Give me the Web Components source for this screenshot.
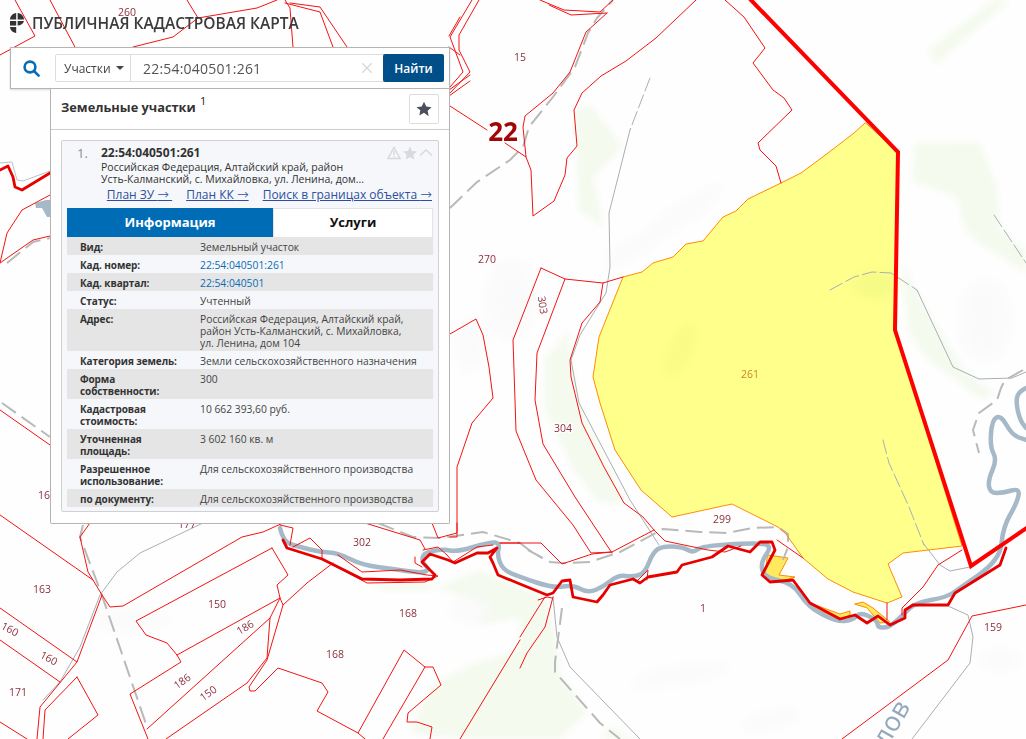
<!DOCTYPE html>
<html lang="ru">
<head>
<meta charset="utf-8">
<title>Публичная кадастровая карта</title>
<style>
  html, body { margin: 0; padding: 0; background: #fff; }
  body { font-family: "Open Sans", "Liberation Sans", sans-serif; }
</style>
</head>
<body>

<kadastr-app>
  <site-brand>ПУБЛИЧНАЯ КАДАСТРОВАЯ КАРТА</site-brand>
  <search-box kind="Участки" value="22:54:040501:261"></search-box>
  <results-panel heading="Земельные участки" count="1">
    <parcel-card index="1." number="22:54:040501:261">
      <span slot="address">Российская Федерация, Алтайский край, район<br>Усть-Калманский, с. Михайловка, ул. Ленина, дом...</span>
      <info-row label="Вид:">Земельный участок</info-row>
      <info-row label="Кад. номер:"><a href="#">22:54:040501:261</a></info-row>
      <info-row label="Кад. квартал:"><a href="#">22:54:040501</a></info-row>
      <info-row label="Статус:">Учтенный</info-row>
      <info-row label="Адрес:">Российская Федерация, Алтайский край,<br>район Усть-Калманский, с. Михайловка,<br>ул. Ленина, дом 104</info-row>
      <info-row label="Категория земель:">Земли сельскохозяйственного назначения</info-row>
      <info-row label="Форма собственности:">300</info-row>
      <info-row label="Кадастровая стоимость:">10 662 393,60 руб.</info-row>
      <info-row label="Уточненная площадь:">3 602 160 кв. м</info-row>
      <info-row label="Разрешенное использование:">Для сельскохозяйственного производства</info-row>
      <info-row label="по документу:">Для сельскохозяйственного производства</info-row>
    </parcel-card>
  </results-panel>
</kadastr-app>

<script>
// map data, page pixels
const GREEN = [
  '575,110 591,105 623,147 593,177 604,227 579,210',
  '994,0 928,50 935,65 1010,0',
  '915,143 979,142 997,187 1000,230 1026,250 1026,273 975,240 964,227 957,197 913,182',
  '568,330 545,360 545,410 575,473 608,503 624,503 608,467 579,403 571,360',
  '902,260 917,293 964,370 994,393 983,400 928,360 909,333',
  '367,583 427,583 470,600 480,625 520,617 520,650 470,665 430,687 410,733 470,739 560,739 587,713 560,673 555,633 545,597 520,587 480,570 430,590 385,590',
  '580,480 613,497 600,502',
  '600,739 610,727 640,739',
  '860,270 895,262 893,300 870,290'
];
const GREY_SPOTS = [
  [680, 215, 50, 9, -35], [630, 250, 30, 8, -30], [510, 300, 24, 40, 0], [470, 345, 14, 26, 0],
  [985, 320, 26, 40, 0], [1000, 660, 20, 10, 0], [680, 675, 50, 8, -10], [770, 720, 30, 8, -15],
  [470, 610, 20, 12, 0], [130, 620, 40, 10, 0]
];
const ROADS = [
  '450,208 477,182 510,160 523,147 529,127 553,97 575,67 588,33 597,18 613,0',
  '7,263 33,242 50,238',
  '2,403 50,437',
  '83,525 80,537 100,590 107,610 147,727',
  '378,523 413,537 440,538 483,532 520,543 529,550 542,558',
  '528,550 550,562 563,563 590,562 620,552 663,529 700,532 727,533 753,528 778,527 788,534 788,547 783,560',
  '562,608 555,662 555,672 600,723 620,739',
  '1023,370 1005,380 1001,388 997,400 979,413 973,430 979,453'
];
const TRACKS = [
  '203,523 140,553 117,572 100,595 80,647 60,682 43,700',
  '630,130 609,213 610,267 606,293 580,335 571,360 579,403 630,500 659,545',
  '553,597 557,637 570,667 640,739',
  '948,606 968,615 973,637 970,663 912,739',
  '923,543 940,565 950,571 970,567',
  '917,290 953,367 979,379 1012,378 1026,372'
];
const TRACKS_DASHED = [
  '650,78 630,130',
  '830,290 854,277 872,272 891,273 917,290',
  '883,440 889,463 909,507 924,545',
  '994,215 1026,263'
];
const RIVER = [
  '280,528 283,542 300,547 320,552 338,553 362,565 393,569 420,573 430,570 422,562 423,553 443,549 457,552 490,542 500,543 497,555 503,570 520,577 553,588 573,585 588,593 603,587 618,575 633,577 645,573 653,552 663,546 683,547 693,553 702,546 753,543 773,545 760,563 765,578 793,583 808,607 837,622 853,620 860,612 877,620 878,628 890,627 905,613 915,603 947,597 957,590 1000,560 1003,527 1017,503 1020,488 1003,493 990,493 988,480 997,460 990,447 992,420 1001,415 1012,435 1026,440',
  '1026,388 1018,392 1016,403 1020,420 1026,428'
];
const PARCELS = [
  '15,0 35,36 0,55', '50,0 75,47', '133,47 173,37 198,18 257,8 277,0', '187,0 198,18',
  '285,0 290,8 293,47', '290,3 320,7 347,47', '285,3 320,12 333,47',
  '472,0 450,37 463,72 450,87', '479,0 459,35 459,50 470,72 450,93',
  '449,36 460,17', '449,47 460,55', '449,90 470,75', '449,96 470,81',
  '540,0 564,10 600,12 613,0', '549,5 571,15 607,13',
  '607,13 586,32 570,72 553,93 525,116 523,127 526,157 505,143', '487,130 450,106',
  '526,157 531,170 533,216 554,201 565,175 567,158 577,146 574,110 582,93 601,76 626,61 656,38 696,0',
  '725,0 744,17 765,48 753,63 773,90 784,98 792,110 758,143 760,150 776,166 781,183',
  '541,268 565,279 603,283 623,277',
  '541,268 513,340 516,431 536,480 573,525 591,553 612,552 654,530',
  '565,279 537,353 535,400 543,444 575,497 612,553',
  '603,283 600,302 582,323 570,360 571,377 582,423 604,467 624,503 643,517 654,530 665,541 708,550 725,552 741,546',
  '450,334 476,319 483,335 489,367 493,398 472,423 457,467 457,537 450,537',
  '500,543 541,543 562,564 592,554 612,552',
  '777,540 803,558', '887,603 887,620',
  '962,550 938,565 923,587 902,608 902,615',
  '842,739 948,660 972,616 1026,605',
  '545,597 520,637', '553,597 545,627 527,653 520,668',
  '0,515 93,580 102,595 77,662 0,608',
  '80,537 90,523', '80,537 88,572 93,580',
  '102,595 110,607 123,606 242,537 263,532 283,523',
  '0,640 60,682',
  '77,662 40,707 37,739', '77,677 98,715 68,739', '77,677 45,710 43,739', '0,722 27,739',
  '272,548 136,621 146,635 167,643 177,655 181,662 130,694 148,739',
  '272,548 288,575 277,585 280,598 177,655',
  '280,598 270,618 267,658 247,683 166,739',
  '270,618 147,729',
  '283,605 267,660 249,687 250,691 255,691 278,668 322,683 328,692 317,711 358,733 404,650 425,667 433,667 441,685 408,713 407,722 417,722 432,727 430,739',
  '425,667 383,739',
  '280,598 283,605 307,583 333,563', '358,733 365,739', '520,640 460,739',
  '365,523 420,540 425,549', '432,523 438,538 457,533 457,523', '500,543 520,543',
  '293,547 310,538 322,550 322,559', '338,555 362,572 400,570 427,575 438,576 425,582 367,583 333,565',
  '415,557 415,563 422,567', '423,550 438,547 447,555 453,562 477,547 493,545',
  '0,263 7,233 22,210 50,195', '0,263 33,240 50,236', '0,410 50,445', '280,525 293,528 290,545',
  '538,600 547,597 552,598', '638,580 648,570 647,580'
];
const BOUNDARY_RIVER = '283,540 287,548 322,559 362,579 400,580 432,579 435,575 428,568 422,562 430,554 448,560 455,563 477,553 488,553 497,548 490,557 493,563 498,575 520,584 547,595 553,593 562,581 570,580 573,597 597,602 603,595 610,585 633,579 640,583 648,577 677,572 682,565 712,557 728,546 750,552 760,542 772,542 775,550 762,575 770,582 793,580 810,603 840,619 855,615 867,623 878,616 890,625 905,618 905,610 913,605 948,605 955,593 1000,565 1006,548';
const BOUNDARY_MAIN = '749,-2 898,152 895,330 971,566 1028,527';
const PLOT = '865,123 854,133 828,153 801,173 781,183 748,199 736,211 723,217 703,241 686,244 673,257 653,263 642,272 623,277 599,337 593,377 600,403 615,450 641,490 672,517 732,504 778,527 786,534 803,558 828,579 853,592 887,603 902,597 888,564 903,553 962,546 895,330 898,152';
const SLIVERS = [
  '768,555 788,558 779,575 795,577 780,582 765,575',
  '810,603 840,614 850,611 850,615 840,619 810,607',
  '855,604 863,602 873,608 890,622 880,623 867,608'
];
const LABELS = [
  ['260', 127, 12], ['15', 520, 57], ['270', 487, 259], ['304', 563, 428, 0, 1], ['299', 722, 519], ['302', 362, 542],
  ['168', 408, 613], ['168', 335, 654], ['163', 42, 589], ['150', 217, 604], ['1', 703, 608], ['159', 993, 627],
  ['171', 18, 692], ['177', 187, 524], ['160', 47, 495],
  ['303', 543, 305, 82], ['186', 245, 627, -30], ['186', 182, 681, -35], ['150', 208, 693, -35],
  ['160', 10, 629, 28], ['160', 49, 658, 28]
];

const poly = (list, attrs) => list.map(p => `<polyline points="${p}" ${attrs}/>`).join('');

// rounds a polyline through the midpoints of its segments
const smooth = (points) => {
  const pts = points.split(' ').map(p => p.split(',').map(Number));
  let d = `M${pts[0].join(' ')}`;
  for (let i = 1; i < pts.length - 1; i++) {
    const mx = (pts[i][0] + pts[i + 1][0]) / 2;
    const my = (pts[i][1] + pts[i + 1][1]) / 2;
    d += `Q${pts[i].join(' ')} ${mx} ${my}`;
  }
  return d + `L${pts[pts.length - 1].join(' ')}`;
};

class MapCanvas extends HTMLElement {
  connectedCallback() {
    const labels = LABELS.map(([t, x, y, r, halo]) => {
      const rot = r ? `transform="rotate(${r} ${x} ${y})"` : '';
      return `<text x="${x}" y="${y}" ${rot} class="${halo ? 'halo' : ''}">${t}</text>`;
    }).join('');
    this.attachShadow({ mode: 'open' });
    this.shadowRoot.innerHTML = `
      <style>
        :host { position: absolute; inset: 0; display: block; background: #fefefe; }
        svg { display: block; width: 100%; height: 100%; }
        text { font: 10.5px "Open Sans", "Liberation Sans", sans-serif; fill: #8c2f3d; text-anchor: middle; dominant-baseline: central; }
        text.halo { paint-order: stroke; stroke: #fff; stroke-width: 3px; }
        text.sheet { font-size: 26px; font-weight: 700; fill: #a00808; }
        text.plot { fill: #c8862a; }
        text.river { font-size: 27px; fill: #93a8bb; }
      </style>
      <svg viewBox="0 0 1026 739" fill="none" stroke-linejoin="round" stroke-linecap="round">
        <defs><filter id="soft" x="-20%" y="-20%" width="140%" height="140%"><feGaussianBlur stdDeviation="3"/></filter>
        <filter id="softer" x="-50%" y="-50%" width="200%" height="200%"><feGaussianBlur stdDeviation="6"/></filter></defs>
        <g filter="url(#soft)">${GREEN.map(p => `<polygon points="${p}" fill="#f4faee"/>`).join('')}</g>
        <g filter="url(#softer)">${GREY_SPOTS.map(([x, y, rx, ry, r]) => `<ellipse cx="${x}" cy="${y}" rx="${rx}" ry="${ry}" transform="rotate(${r} ${x} ${y})" fill="#fafafa"/>`).join('')}</g>
        <polygon points="${PLOT}" fill="#ffff8c"/>
        <g filter="url(#softer)">
          <ellipse cx="680" cy="350" rx="12" ry="30" transform="rotate(25 680 350)" fill="#f6f684" opacity=".6"/>
          <ellipse cx="875" cy="285" rx="22" ry="14" fill="#f2fa84" opacity=".8"/>
        </g>
        ${SLIVERS.map(p => `<polygon points="${p}" fill="#ffe95e" stroke="#ff8c00" stroke-width="1"/>`).join('')}
        ${poly(TRACKS, 'stroke="#a7afb6" stroke-width="1"')}
        ${poly(TRACKS_DASHED, 'stroke="#a7afb6" stroke-width="1" stroke-dasharray="14 4"')}
        ${poly(ROADS, 'stroke="#b9b9b9" stroke-width="2" stroke-linecap="butt" stroke-dasharray="17 7"')}
        ${RIVER.map(p => `<path d="${smooth(p)}" stroke="#a5b9c8" stroke-width="4.500"/>`).join('')}
        <polygon points="35,203 46,200 50,200 50,217 47,217 42,208 36,208" fill="#a5b9c8"/>
        <polyline points="0,163 12,162 17,180 23,181 50,171" stroke="#b4c2cd" stroke-width="1"/>
        <polygon points="${PLOT}" stroke="#ff8c00" stroke-width="1"/>
        ${poly(PARCELS, 'stroke="#f41212" stroke-width="1"')}
        <polyline points="${BOUNDARY_RIVER}" stroke="#e60000" stroke-width="2.800"/>
        <polyline points="0,170 8,166 13,177 15,187 22,190 50,173" stroke="#e60000" stroke-width="2.800"/>
        <polyline points="${BOUNDARY_MAIN}" stroke="#ff0000" stroke-width="4" stroke-linejoin="miter"/>
        ${labels}
        <text x="750" y="374" class="plot">261</text>
        <text x="503" y="131" class="sheet">22</text>
        <text x="890" y="722" transform="rotate(-60 890 722)" class="river">лов</text>
      </svg>
    `;
  }
}

class SiteBrand extends HTMLElement {
  connectedCallback() {
    this.attachShadow({ mode: 'open' });
    this.shadowRoot.innerHTML = `
      <style>
        :host { display: flex; align-items: center; gap: 8px; height: 47px; box-sizing: border-box; padding-bottom: 1px;
          color: #3b3b3b; font: 600 15.500px/20px "Open Sans", "Liberation Sans", sans-serif; white-space: nowrap; }
        svg { width: 14px; height: 20px; flex: none; margin-top: -1px; }
      </style>
      <svg viewBox="0 0 14 20" fill="#333">
        <path d="M6.200 0C2.700.4 0 3.200 0 6.600h6.200z"/>
        <path d="M7.600 0C11 .2 14 3 14 6.600H7.600z"/>
        <path d="M0 8h6.200v4.600H0z"/>
        <path d="M7.600 8H14c-.6 2.600-3.200 4.600-6.400 4.600z"/>
        <path d="M0 14h6.200v6C2.700 19.400 0 17 0 14z"/>
      </svg>
      <span><slot></slot></span>
    `;
  }
}

class SearchBox extends HTMLElement {
  connectedCallback() {
    this.attachShadow({ mode: 'open' });
    this.shadowRoot.innerHTML = `
      <style>
        :host { display: flex; align-items: center; width: 440px; height: 42px; box-sizing: border-box; background: #fff;
          border: 1px solid #b4b4b4; box-shadow: 0 1px 2px rgba(0,0,0,.15); font-family: "Open Sans", "Liberation Sans", sans-serif; }
        .lens { width: 44px; display: flex; justify-content: center; flex: none; }
        .lens svg { width: 17px; height: 17px; margin-left: -3px; }
        .group { display: flex; width: 389px; height: 28px; box-sizing: border-box; border: 1px solid #ddd; border-radius: 2px; }
        .kind { width: 75px; flex: none; box-sizing: border-box; display: flex; align-items: center; gap: 5px; padding-left: 8px;
          border-right: 1px solid #ddd; font-size: 12px; color: #444; }
        .kind i { width: 0; height: 0; border: 4px solid transparent; border-top-color: #444; border-bottom: 0; }
        .input { flex: 1; display: flex; align-items: center; padding-left: 12px; font-size: 14px; color: #555; letter-spacing: .2px; }
        .clear { width: 22px; flex: none; display: flex; align-items: center; }
        .clear svg { width: 10px; height: 10px; }
        button { width: 61px; flex: none; margin: -1px; border: 0; border-radius: 2px; background: #004f88; color: #fff;
          font: 600 12px "Open Sans", "Liberation Sans", sans-serif; padding: 0; }
      </style>
      <div class="lens">
        <svg viewBox="0 0 17 17" fill="none" stroke="#0a6cb4" stroke-width="2.600" stroke-linecap="round"><circle cx="7" cy="7" r="5.400"/><path d="M11 11l4.600 4.600"/></svg>
      </div>
      <div class="group">
        <div class="kind">${this.getAttribute('kind')}<i></i></div>
        <div class="input"><span style="flex:1">${this.getAttribute('value')}</span>
          <div class="clear"><svg viewBox="0 0 10 10" stroke="#d8d8d8" stroke-width="1.300"><path d="M0 0l10 10M10 0L0 10"/></svg></div>
        </div>
        <button type="button">Найти</button>
      </div>
    `;
  }
}

class ResultsPanel extends HTMLElement {
  connectedCallback() {
    this.attachShadow({ mode: 'open' });
    this.shadowRoot.innerHTML = `
      <style>
        :host { display: block; width: 400px; margin-left: 40px; box-sizing: border-box; background: #fff;
          border: 1px solid #b4b4b4; border-top: 0; border-radius: 0 0 2px 2px; font-family: "Open Sans", "Liberation Sans", sans-serif; }
        header { height: 41px; box-sizing: border-box; display: flex; align-items: center; justify-content: space-between;
          padding: 0 10px 0 10px; border-bottom: 1px solid #ccc; }
        h2 { margin: 0 0 5px; font-size: 12.800px; font-weight: 700; color: #333; line-height: 16px; }
        sup { font-size: 11px; font-weight: 400; color: #222; line-height: 0; vertical-align: 7px; margin-left: 1px; }
        .fav { width: 30px; height: 30px; box-sizing: border-box; border: 1px solid #ddd; border-radius: 2px; display: flex; align-items: center; justify-content: center; }
        .fav svg { width: 16px; height: 16px; }
        .body { padding: 10px 10px 11px; }
      </style>
      <header>
        <h2>${this.getAttribute('heading')} <sup>${this.getAttribute('count')}</sup></h2>
        <div class="fav"><svg viewBox="0 0 24 24" fill="#4a4f5a"><path d="M12 1l3.400 7.300 7.900 1-5.800 5.500 1.500 7.900L12 17.800l-7 3.900 1.500-7.900L.7 9.300l7.900-1z"/></svg></div>
      </header>
      <div class="body"><slot></slot></div>
    `;
  }
}

class ParcelCard extends HTMLElement {
  connectedCallback() {
    this.attachShadow({ mode: 'open' });
    this.shadowRoot.innerHTML = `
      <style>
        :host { display: block; box-sizing: border-box; background: #f5f7fa; border: 1px solid #cfd1d3; border-radius: 2px; padding: 0 5px 4px; color: #333; }
        .head { position: relative; display: grid; grid-template-columns: 24px 1fr; padding: 4px 0 0 10px; height: 44px; box-sizing: border-box; margin-bottom: 2px; }
        .idx { font-size: 13px; line-height: 16px; color: #8a8f96; }
        .num { font-size: 12px; font-weight: 700; line-height: 16px; color: #333; }
        .addr { font-size: 10.500px; line-height: 12px; }
        .tools { position: absolute; right: 0; top: 5px; display: flex; gap: 2px; }
        .tools svg { width: 14px; height: 14px; display: block; }
        nav { display: flex; justify-content: flex-end; gap: 14px; font-size: 12px; line-height: 16px; height: 16px; padding-right: 1px; margin-bottom: 5px; }
        nav a { color: #2e4f9e; white-space: pre; }
        nav span { font-family: "DejaVu Sans", sans-serif; font-size: 14px; line-height: 10px; font-weight: 300; }
        .tabs { display: grid; grid-template-columns: 206px 1fr; height: 29px; font-size: 13px; font-weight: 700; line-height: 29px; text-align: center; }
        .tabs div { background: #006cb5; color: #fff; }
        .tabs div + div { background: #fff; color: #111; border: 1px solid #e3e3e3; border-bottom: 0; line-height: 27px; box-sizing: border-box; }
      </style>
      <div class="head">
        <span class="idx">${this.getAttribute('index')}</span>
        <div>
          <div class="num">${this.getAttribute('number')}</div>
          <div class="addr"><slot name="address"></slot></div>
        </div>
        <div class="tools">
          <svg viewBox="0 0 14 14" fill="none" stroke="#d6d9dd" stroke-width="1.500"><path d="M7 1.500L13 12.500H1z"/><path d="M7 5v4M7 10v1.300"/></svg>
          <svg viewBox="0 0 14 14" fill="#d6d9dd"><path d="M7 .6l2 4.300 4.700.6-3.400 3.200.9 4.700L7 11.100l-4.200 2.300.9-4.700L.3 5.500 5 4.900z"/></svg>
          <svg viewBox="0 0 14 14" fill="none" stroke="#d6d9dd" stroke-width="1.500"><path d="M1 9.500L7 4l6 5.500"/></svg>
        </div>
      </div>
      <nav>
        <a href="#">План ЗУ <span>→</span> </a>
        <a href="#">План КК <span>→</span></a>
        <a href="#">Поиск в границах объекта <span>→</span></a>
      </nav>
      <div class="tabs"><div>Информация</div><div>Услуги</div></div>
      <slot></slot>
    `;
  }
}

class InfoRow extends HTMLElement {
  connectedCallback() {
    this.attachShadow({ mode: 'open' });
    this.shadowRoot.innerHTML = `
      <style>
        :host { display: grid; grid-template-columns: 120px 1fr; padding: 4px 8px 2px 13px; font-size: 10.300px; line-height: 12px; color: #444; background: #f5f7fa; }
        /* first child of the card is the address span */
        :host(:nth-child(even)) { background: #e5e5e5; }
        b { font-size: 10px; font-weight: 700; letter-spacing: -.1px; color: #333; padding-right: 8px; }
        ::slotted(a) { color: #0a6cb4; text-decoration: none; }
      </style>
      <b>${this.getAttribute('label')}</b>
      <div><slot></slot></div>
    `;
  }
}

class KadastrApp extends HTMLElement {
  connectedCallback() {
    this.attachShadow({ mode: 'open' });
    this.shadowRoot.innerHTML = `
      <style>
        :host { display: block; position: relative; width: 1026px; height: 739px; overflow: hidden; }
        .overlay { position: absolute; left: 10px; top: 0; display: flex; flex-direction: column; align-items: flex-start; }
      </style>
      <map-canvas></map-canvas>
      <div class="overlay"><slot></slot></div>
    `;
  }
}

customElements.define('map-canvas', MapCanvas);
customElements.define('site-brand', SiteBrand);
customElements.define('search-box', SearchBox);
customElements.define('results-panel', ResultsPanel);
customElements.define('parcel-card', ParcelCard);
customElements.define('info-row', InfoRow);
customElements.define('kadastr-app', KadastrApp);
</script>
</body>
</html>
